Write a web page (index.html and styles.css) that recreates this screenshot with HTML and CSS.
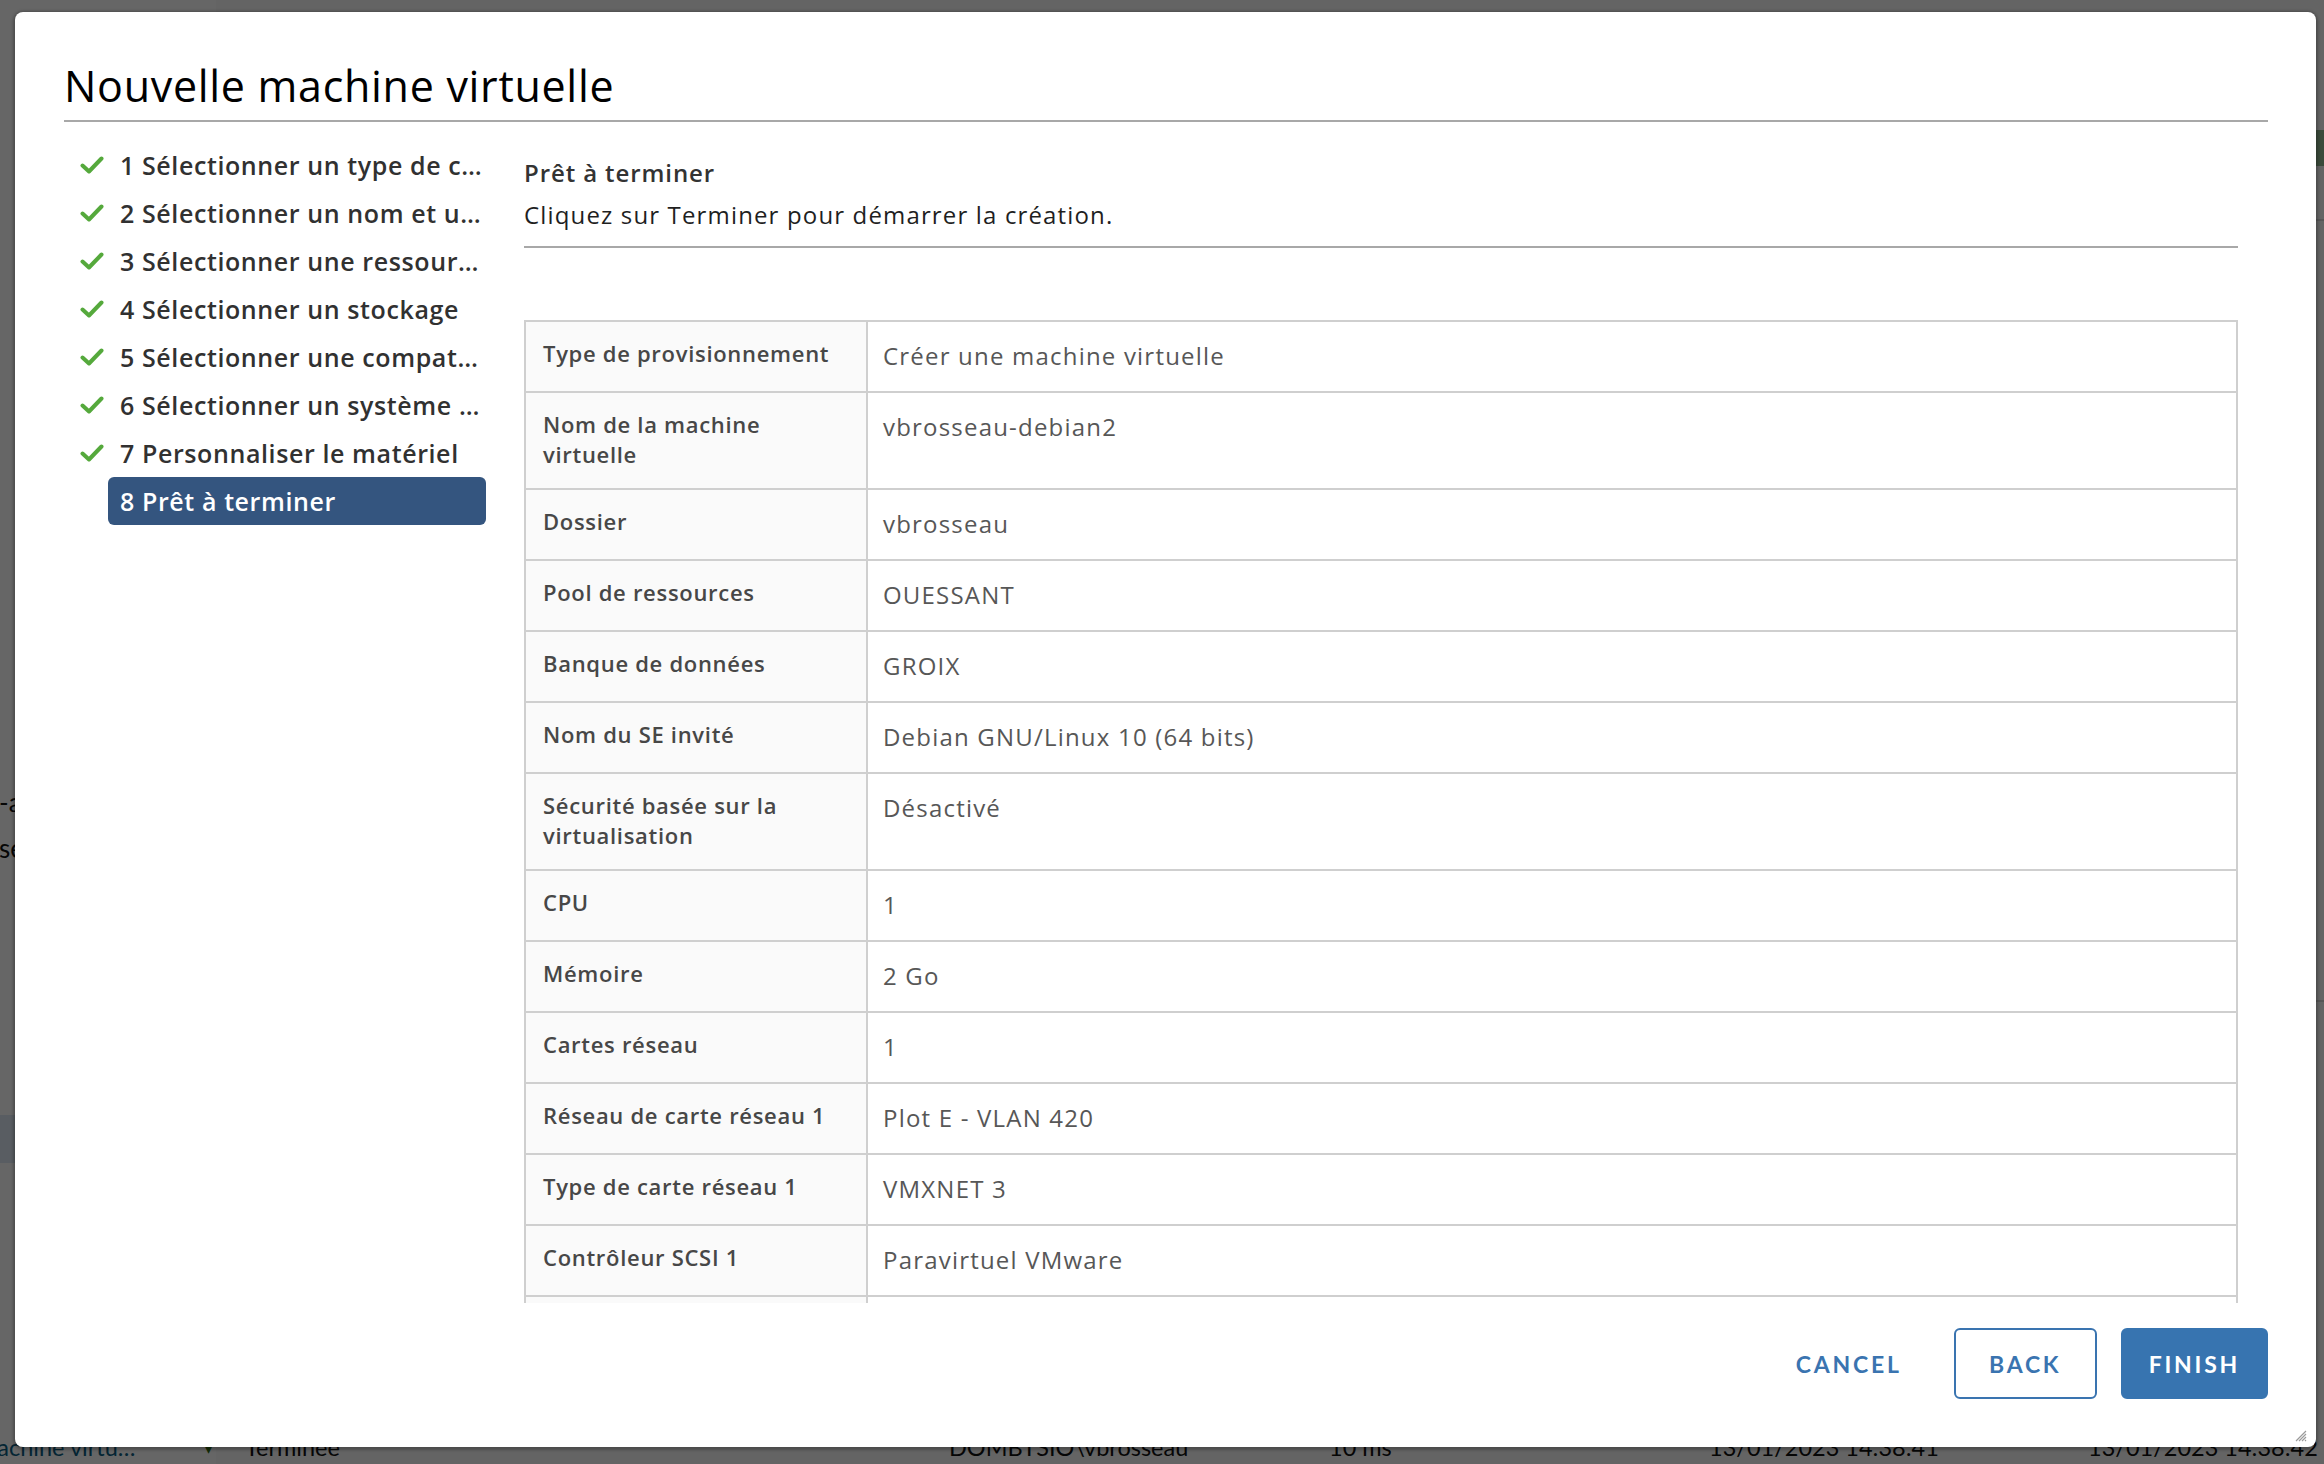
FILE: index.html
```html
<!DOCTYPE html>
<html lang="fr">
<head>
<meta charset="utf-8">
<title>Nouvelle machine virtuelle</title>
<link rel="stylesheet" href="styles.css">
</head>
<body>
<div class="app-bg">
  <div class="bg-sidebar"></div>
  <span class="bg-frag frag-1">-a</span>
  <span class="bg-frag frag-2">se</span>
  <div class="bg-band"></div>
  <div class="bg-chip"></div>
  <div class="bg-line line-1"></div>
  <div class="bg-line line-2"></div>
  <div class="bg-row">
    <span class="bg-cell cell-name">machine virtu…</span>
    <span class="bg-cell cell-caret">▾</span>
    <span class="bg-cell cell-status">Terminée</span>
    <span class="bg-cell cell-user">DOMBTSIO\vbrosseau</span>
    <span class="bg-cell cell-ms">10 ms</span>
    <span class="bg-cell cell-start">13/01/2023 14:38:41</span>
    <span class="bg-cell cell-end">13/01/2023 14:38:42</span>
  </div>
</div>
<div class="backdrop"></div>

<div class="modal" role="dialog" aria-labelledby="modal-title">
  <header class="modal-header">
    <h3 class="modal-title" id="modal-title">Nouvelle machine virtuelle</h3>
  </header>

  <div class="modal-body">
    <nav class="steps">
      <div class="step done">
        <span class="step-icon"><svg viewBox="0 0 24 18" width="24" height="18"><path d="M2.5 9.5 L9 15.5 L21.5 2.5"/></svg></span>
        <span class="step-label">1 Sélectionner un type de c…</span>
      </div>
      <div class="step done">
        <span class="step-icon"><svg viewBox="0 0 24 18" width="24" height="18"><path d="M2.5 9.5 L9 15.5 L21.5 2.5"/></svg></span>
        <span class="step-label">2 Sélectionner un nom et u…</span>
      </div>
      <div class="step done">
        <span class="step-icon"><svg viewBox="0 0 24 18" width="24" height="18"><path d="M2.5 9.5 L9 15.5 L21.5 2.5"/></svg></span>
        <span class="step-label">3 Sélectionner une ressour…</span>
      </div>
      <div class="step done">
        <span class="step-icon"><svg viewBox="0 0 24 18" width="24" height="18"><path d="M2.5 9.5 L9 15.5 L21.5 2.5"/></svg></span>
        <span class="step-label">4 Sélectionner un stockage</span>
      </div>
      <div class="step done">
        <span class="step-icon"><svg viewBox="0 0 24 18" width="24" height="18"><path d="M2.5 9.5 L9 15.5 L21.5 2.5"/></svg></span>
        <span class="step-label">5 Sélectionner une compat…</span>
      </div>
      <div class="step done">
        <span class="step-icon"><svg viewBox="0 0 24 18" width="24" height="18"><path d="M2.5 9.5 L9 15.5 L21.5 2.5"/></svg></span>
        <span class="step-label">6 Sélectionner un système …</span>
      </div>
      <div class="step done">
        <span class="step-icon"><svg viewBox="0 0 24 18" width="24" height="18"><path d="M2.5 9.5 L9 15.5 L21.5 2.5"/></svg></span>
        <span class="step-label">7 Personnaliser le matériel</span>
      </div>
      <div class="step active">
        <span class="step-icon"></span>
        <span class="step-label">8 Prêt à terminer</span>
      </div>
    </nav>

    <section class="page">
      <h4 class="page-title">Prêt à terminer</h4>
      <p class="page-desc">Cliquez sur Terminer pour démarrer la création.</p>

      <table class="summary">
        <colgroup><col class="col-key"><col class="col-val"></colgroup>
        <tbody>
          <tr><td class="k">Type de provisionnement</td><td class="v">Créer une machine virtuelle</td></tr>
          <tr><td class="k">Nom de la machine virtuelle</td><td class="v">vbrosseau-debian2</td></tr>
          <tr><td class="k">Dossier</td><td class="v">vbrosseau</td></tr>
          <tr><td class="k">Pool de ressources</td><td class="v">OUESSANT</td></tr>
          <tr><td class="k">Banque de données</td><td class="v">GROIX</td></tr>
          <tr><td class="k">Nom du SE invité</td><td class="v">Debian GNU/Linux 10 (64 bits)</td></tr>
          <tr><td class="k">Sécurité basée sur la virtualisation</td><td class="v">Désactivé</td></tr>
          <tr><td class="k">CPU</td><td class="v">1</td></tr>
          <tr><td class="k">Mémoire</td><td class="v">2 Go</td></tr>
          <tr><td class="k">Cartes réseau</td><td class="v">1</td></tr>
          <tr><td class="k">Réseau de carte réseau 1</td><td class="v">Plot E - VLAN 420</td></tr>
          <tr><td class="k">Type de carte réseau 1</td><td class="v">VMXNET 3</td></tr>
          <tr><td class="k">Contrôleur SCSI 1</td><td class="v">Paravirtuel VMware</td></tr>
          <tr class="row-more"><td class="k"></td><td class="v"></td></tr>
        </tbody>
      </table>
    </section>
  </div>

  <footer class="modal-footer">
    <button class="btn btn-link" type="button">CANCEL</button>
    <button class="btn btn-outline" type="button">BACK</button>
    <button class="btn btn-primary" type="button">FINISH</button>
  </footer>

  <span class="resize-handle" aria-hidden="true">
    <svg viewBox="0 0 14 14" width="14" height="14"><path d="M13 3 L3 13 M13 6 L6 13 M13 9 L9 13 M13 12 L12 13"/></svg>
  </span>
</div>
</body>
</html>
```

FILE: styles.css
```css
html, body {
  margin: 0;
  padding: 0;
}

body {
  width: 2324px;
  height: 1464px;
  overflow: hidden;
  position: relative;
  background: #fafafa;
  font-family: "Open Sans", Lato, "Liberation Sans", sans-serif;
}

/* ---------- application behind the overlay ---------- */
.app-bg {
  position: absolute;
  inset: 0;
  font-family: Lato, "Liberation Sans", sans-serif;
}

.bg-sidebar {
  position: absolute;
  left: 0;
  top: 0;
  width: 216px;
  height: 100%;
  background: #ffffff;
}

.bg-frag {
  position: absolute;
  font-size: 26px;
  line-height: 30px;
  color: #111;
}
.frag-1 { left: -1px; top: 787px; }
.frag-2 { left: -1px; top: 833px; }

.bg-band {
  position: absolute;
  left: 0;
  top: 1115px;
  width: 40px;
  height: 48px;
  background: #dee8f5;
}

.bg-chip {
  position: absolute;
  right: 0;
  top: 130px;
  width: 20px;
  height: 36px;
  background: #94b994;
}

.bg-line {
  position: absolute;
  right: 0;
  width: 40px;
  height: 2px;
  background: #d8d8d8;
}
.line-1 { top: 219px; }
.line-2 { top: 1000px; }

.bg-row {
  position: absolute;
  left: 0;
  top: 1432px;
  width: 100%;
  height: 40px;
  font-size: 23.5px;
  line-height: 30px;
  color: #111;
}
.bg-cell { position: absolute; top: 0; white-space: nowrap; }
.cell-name { left: -22px; color: #0a5c82; }
.cell-caret { left: 204px; color: #2e6b10; font-size: 18px; }
.cell-status { left: 245px; }
.cell-user { left: 949px; }
.cell-ms { left: 1329px; }
.cell-start { left: 1709px; }
.cell-end { left: 2088px; }

.backdrop {
  position: absolute;
  inset: 0;
  background: rgba(0, 0, 0, 0.6);
}

/* ---------- modal ---------- */
.modal {
  position: absolute;
  left: 15px;
  top: 12px;
  width: 2301px;
  height: 1435px;
  box-sizing: border-box;
  padding: 49px 48px 48px 49px;
  display: flex;
  flex-direction: column;
  background: #ffffff;
  border-radius: 8px;
  box-shadow: 0 1px 3px 2px rgba(0, 0, 0, 0.25);
}

.modal-header {
  flex: none;
  border-bottom: 2px solid #a8a8a8;
  padding-bottom: 9px;
}

.modal-title {
  margin: 0;
  font-size: 43px;
  line-height: 50px;
  font-weight: 400;
  letter-spacing: 0.7px;
  color: #000;
}

.modal-body {
  flex: none;
  height: 1160px;
  margin-top: 21px;
  display: flex;
  gap: 38px;
}

/* steps */
.steps {
  width: 422px;
  flex: none;
  margin-top: -2px;
}

.step {
  display: flex;
  align-items: center;
  height: 48px;
}

.step-icon {
  width: 44px;
  flex: none;
  box-sizing: border-box;
  padding-left: 16px;
  display: flex;
  align-items: center;
}

.step-icon svg path {
  fill: none;
  stroke: #55a93c;
  stroke-width: 4;
  stroke-linecap: round;
  stroke-linejoin: round;
}

.step-label {
  flex: 1;
  min-width: 0;
  height: 48px;
  line-height: 48px;
  box-sizing: border-box;
  padding: 0 2px 0 12px;
  border-radius: 6px;
  font-size: 25px;
  font-weight: 600;
  letter-spacing: 0.6px;
  color: #313131;
  white-space: nowrap;
  overflow: hidden;
  text-overflow: ellipsis;
}

.step.active .step-label {
  background: #34557f;
  color: #ffffff;
}

/* page */
.page {
  flex: 1;
  min-width: 0;
  overflow: hidden;
  padding: 14px 30px 0 0;
}

.page-title {
  margin: 0;
  font-size: 24px;
  line-height: 32px;
  font-weight: 600;
  letter-spacing: 0.9px;
  color: #333;
}

.page-desc {
  margin: 10px 0 0;
  padding-bottom: 15px;
  border-bottom: 2px solid #a8a8a8;
  font-size: 24px;
  line-height: 32px;
  letter-spacing: 1.15px;
  color: #1f1f1f;
}

.summary {
  margin-top: 72px;
  width: 100%;
  border-collapse: collapse;
  table-layout: fixed;
}

.col-key { width: 342px; }

.summary td {
  border: 2px solid #cfcfcf;
  vertical-align: top;
}

.summary td.k {
  padding: 15.5px 17px 18.5px 17px;
  background: #fafafa;
  font-size: 22px;
  line-height: 30.5px;
  font-weight: 600;
  letter-spacing: 0.7px;
  color: #474747;
}

.summary td.v {
  padding: 16px 18px 18px 15px;
  font-size: 24px;
  line-height: 35px;
  letter-spacing: 1.2px;
  color: #575757;
}

.summary .row-more td {
  height: 36px;
}

/* footer */
.modal-footer {
  flex: none;
  height: 71px;
  margin-top: 25px;
  display: flex;
  justify-content: flex-end;
  align-items: center;
  gap: 24px;
}

.btn {
  height: 71px;
  box-sizing: border-box;
  padding: 0 26px;
  border: 2px solid transparent;
  border-radius: 6px;
  background: transparent;
  font-family: Lato, "Open Sans", "Liberation Sans", sans-serif;
  font-size: 23px;
  font-weight: 700;
  letter-spacing: 0.12em;
  color: #3a74b0;
  cursor: pointer;
}

.btn-outline {
  min-width: 143px;
  border-color: #3a74b0;
  background: #fff;
}

.btn-primary {
  min-width: 147px;
  background: #3774b0;
  border-color: #3774b0;
  color: #ffffff;
}

.resize-handle {
  position: absolute;
  right: 9px;
  bottom: 8px;
  width: 14px;
  height: 14px;
}

.resize-handle svg path {
  stroke: #9a9a9a;
  stroke-width: 1.2;
  fill: none;
}
```
